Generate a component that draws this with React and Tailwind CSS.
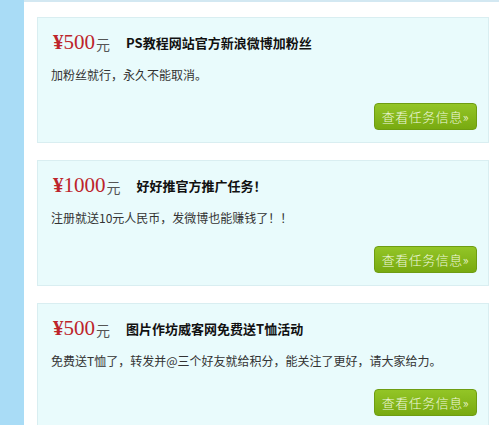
const tasks = [
  {
    price: '500',
    title: 'PS教程网站官方新浪微博加粉丝',
    desc: '加粉丝就行，永久不能取消。',
  },
  {
    price: '1000',
    title: '好好推官方推广任务！',
    desc: '注册就送10元人民币，发微博也能赚钱了！！',
  },
  {
    price: '500',
    title: '图片作坊威客网免费送T恤活动',
    desc: '免费送T恤了，转发并@三个好友就给积分，能关注了更好，请大家给力。',
  },
]

function TaskCard({ task }) {
  return (
    <div className="h-[126px] shrink-0 bg-[#e9fbfc] border border-[#d9eef1] pl-[13px] pr-[11px] pt-[13px]">
      {/* price + title */}
      <div className="h-[22px] flex items-center pl-[2px]">
        <span className="text-[21px] leading-none text-[#bd242b]" style={{ fontFamily: '"Liberation Serif", serif' }}>
          <span className="font-bold">¥</span>{task.price}
        </span>
        <span className="text-[14px] leading-none text-[#555] ml-[1px] mt-[3px]">元</span>
        <span className="ml-[16px] text-[13px] font-bold text-[#111] mt-[2px]">{task.title}</span>
      </div>

      {/* description */}
      <p className="mt-[12px] text-[12px] leading-[20px] text-[#333]">{task.desc}</p>

      {/* button */}
      <div className="flex justify-end mt-[18px]">
        <button
          type="button"
          className="w-[103px] h-[27px] rounded-[4px] border border-[#6e9d12] bg-gradient-to-b from-[#93c526] to-[#78aa10] text-[13px] font-light text-[#eef8dc] tracking-[0.5px]"
        >
          查看任务信息»
        </button>
      </div>
    </div>
  )
}

export default function App() {
  return (
    <div
      className="w-[499px] h-[425px] overflow-hidden flex bg-white"
      style={{ fontFamily: '"Noto Sans CJK SC", "Liberation Sans", sans-serif' }}
    >
      <div className="w-[24px] shrink-0 bg-[#a9dcf6]" />
      <div className="flex-1 border-t-2 border-[#d3e8f2] pt-[15px] pl-[13px] pr-[10px] flex flex-col gap-[17px]">
        {tasks.map((task, i) => (
          <TaskCard key={i} task={task} />
        ))}
      </div>
    </div>
  )
}
